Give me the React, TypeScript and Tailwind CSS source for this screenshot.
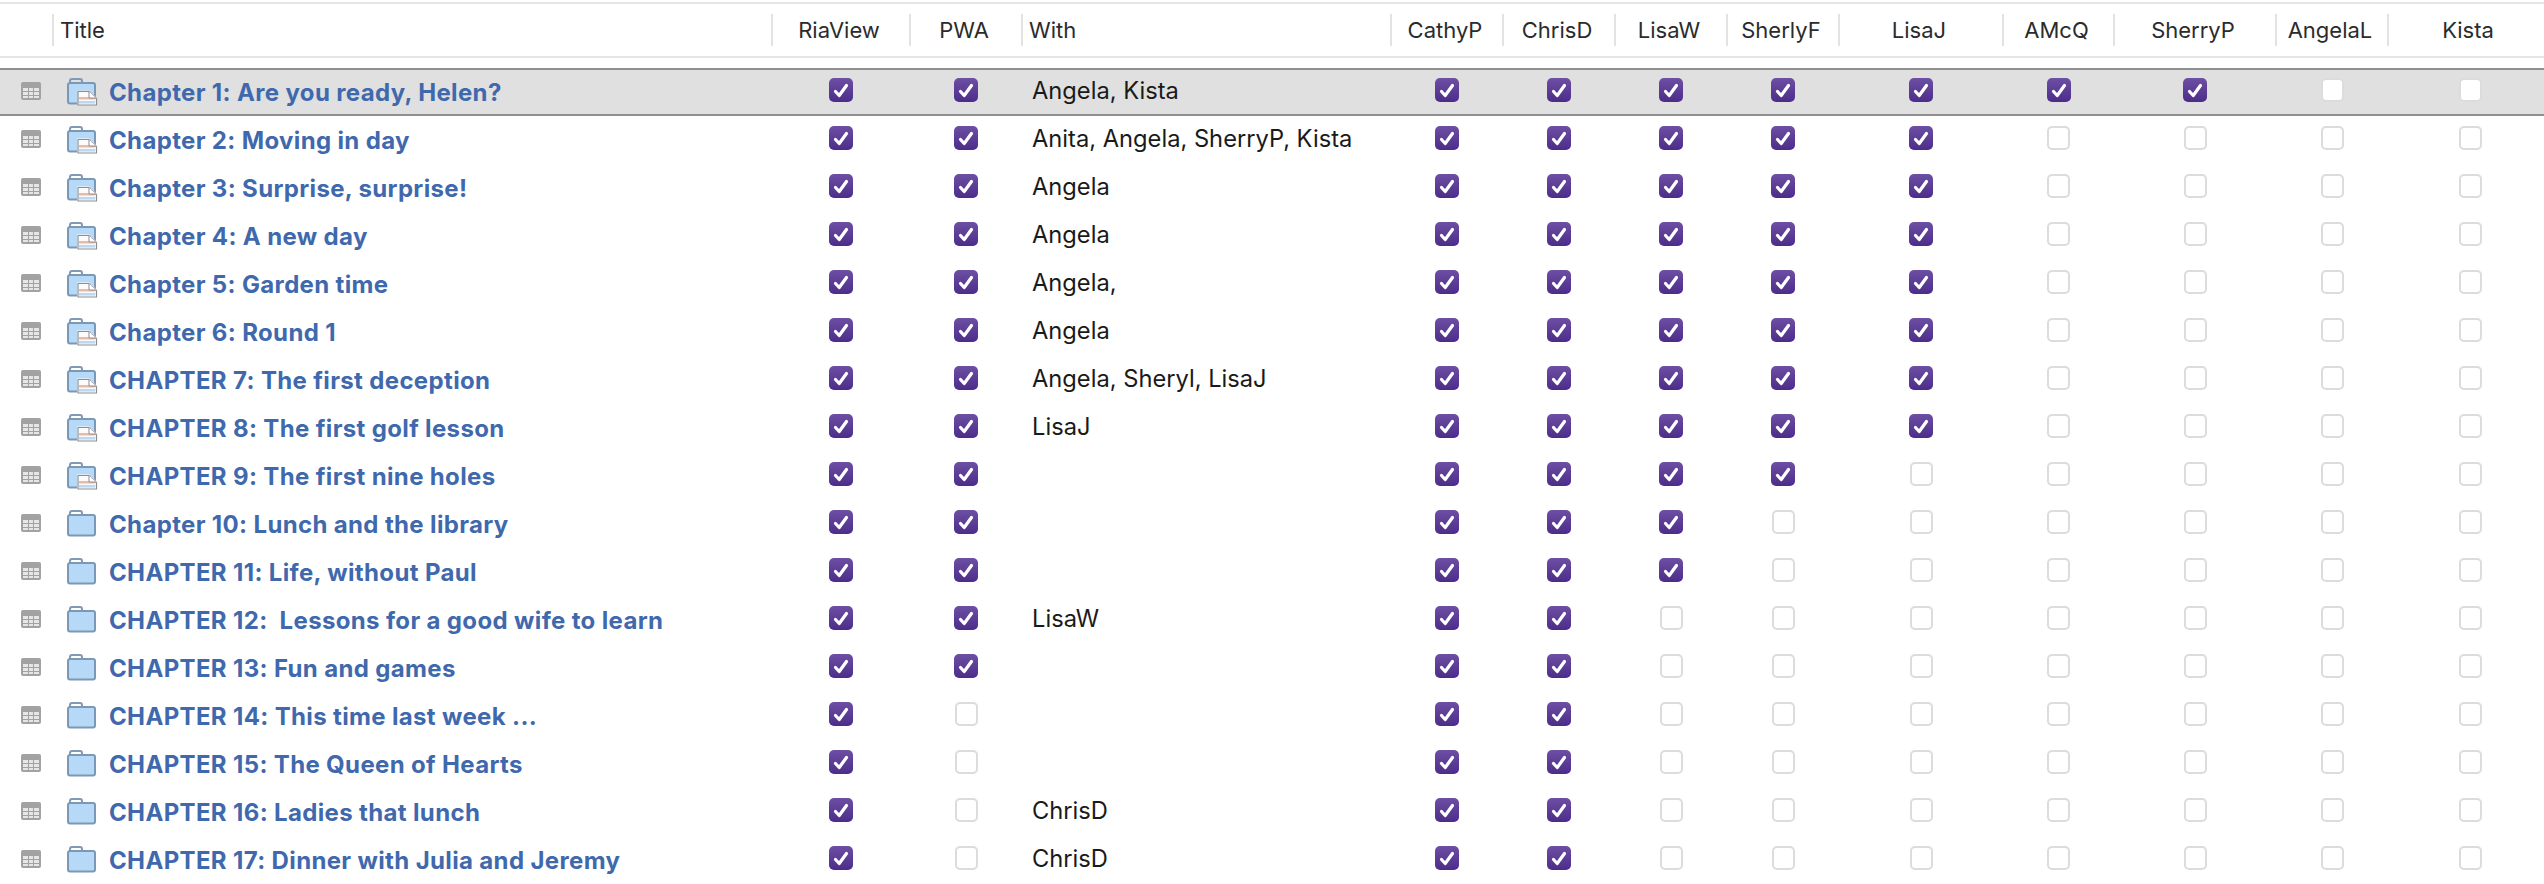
import React from 'react'

const GRID = 'grid grid-cols-[52px_719px_138px_112px_369px_112px_112px_112px_112px_164px_111px_162px_112px_164px]'

const people = ['CathyP', 'ChrisD', 'LisaW', 'SherlyF', 'LisaJ', 'AMcQ', 'SherryP', 'AngelaL', 'Kista']

// ticks = how many person columns are checked, left to right
const rows = [
    { title: 'Chapter 1: Are you ready, Helen?', pwa: true, withWho: 'Angela, Kista', ticks: 7, doc: true },
    { title: 'Chapter 2: Moving in day', pwa: true, withWho: 'Anita, Angela, SherryP, Kista', ticks: 5, doc: true },
    { title: 'Chapter 3: Surprise, surprise!', pwa: true, withWho: 'Angela', ticks: 5, doc: true },
    { title: 'Chapter 4: A new day', pwa: true, withWho: 'Angela', ticks: 5, doc: true },
    { title: 'Chapter 5: Garden time', pwa: true, withWho: 'Angela,', ticks: 5, doc: true },
    { title: 'Chapter 6: Round 1', pwa: true, withWho: 'Angela', ticks: 5, doc: true },
    { title: 'CHAPTER 7: The first deception', pwa: true, withWho: 'Angela, Sheryl, LisaJ', ticks: 5, doc: true },
    { title: 'CHAPTER 8: The first golf lesson', pwa: true, withWho: 'LisaJ', ticks: 5, doc: true },
    { title: 'CHAPTER 9: The first nine holes', pwa: true, withWho: '', ticks: 4, doc: true },
    { title: 'Chapter 10: Lunch and the library', pwa: true, withWho: '', ticks: 3, doc: false },
    { title: 'CHAPTER 11: Life, without Paul', pwa: true, withWho: '', ticks: 3, doc: false },
    { title: 'CHAPTER 12:  Lessons for a good wife to learn', pwa: true, withWho: 'LisaW', ticks: 2, doc: false },
    { title: 'CHAPTER 13: Fun and games', pwa: true, withWho: '', ticks: 2, doc: false },
    { title: 'CHAPTER 14: This time last week ...', pwa: false, withWho: '', ticks: 2, doc: false },
    { title: 'CHAPTER 15: The Queen of Hearts', pwa: false, withWho: '', ticks: 2, doc: false },
    { title: 'CHAPTER 16: Ladies that lunch', pwa: false, withWho: 'ChrisD', ticks: 2, doc: false },
    { title: 'CHAPTER 17: Dinner with Julia and Jeremy', pwa: false, withWho: 'ChrisD', ticks: 2, doc: false },
]

function TableIcon() {
    return (
        <svg width="20" height="18" viewBox="0 0 20 18" className="block">
            <rect x="0" y="0" width="20" height="18" rx="2" fill="#a2a2a2" />
            <rect x="2" y="6" width="5" height="3" fill="#e6e6e6" />
            <rect x="8" y="6" width="4" height="3" fill="#e6e6e6" />
            <rect x="13" y="6" width="5" height="3" fill="#e6e6e6" />
            <rect x="2" y="10" width="5" height="3" fill="#e6e6e6" />
            <rect x="8" y="10" width="4" height="3" fill="#e6e6e6" />
            <rect x="13" y="10" width="5" height="3" fill="#e6e6e6" />
            <rect x="2" y="14" width="5" height="2" fill="#e6e6e6" />
            <rect x="8" y="14" width="4" height="2" fill="#e6e6e6" />
            <rect x="13" y="14" width="5" height="2" fill="#e6e6e6" />
        </svg>
    )
}

function FolderIcon({ doc, bg }: { doc: boolean; bg: string }) {
    return (
        <svg width="31" height="28" viewBox="0 0 31 28" className="block">
            <path d="M3 5 V3 Q3 1 5 1 H13 Q15 1 15 3 V5" fill="none" stroke="#8099b6" strokeWidth="2" />
            <rect x="1" y="5" width="27" height="20.5" rx="2" fill="#b6d9f7" stroke="#7d97b6" strokeWidth="2" />
            {doc && (
                <>
                    <path d="M10 12.5 H22 L30 20 V27.5 H10 Z" fill={bg} stroke="none" />
                    <path d="M11 13.5 H22 L29.5 20.5 V27 H11 Z" fill="#fbfbfb" stroke="#8f8f8f" strokeWidth="1.2" />
                    <rect x="12" y="19" width="16" height="2.5" fill="#eab9a8" />
                    <rect x="12" y="23" width="16" height="2.5" fill="#b6d9f7" />
                    <path d="M22 13.5 V20 H29" fill="#ffffff" stroke="#8f8f8f" strokeWidth="1" />
                </>
            )}
        </svg>
    )
}

function Check({ on }: { on: boolean }) {
    if (!on) {
        return <div className="w-[23px] h-[24px] rounded-[5px] bg-white border-2 border-[#dcdcdc]" />
    }
    return (
        <div className="w-[24px] h-[24px] rounded-[5px] bg-gradient-to-b from-[#6d4fa3] to-[#4c2c8a] flex items-center justify-center">
            <svg width="16" height="15" viewBox="0 0 16 15">
                <path d="M2.5 8.5 L6.2 12.5 L13.5 2.5" fill="none" stroke="#ffffff" strokeWidth="3.2" strokeLinecap="round" strokeLinejoin="round" />
            </svg>
        </div>
    )
}

function CheckCell({ on }: { on: boolean }) {
    return (
        <div className="flex justify-center pl-[2px] pt-[8px]">
            <Check on={on} />
        </div>
    )
}

function HeaderCell({ label, left, first }: { label?: string; left?: boolean; first?: boolean }) {
    return (
        <div className={`h-[32px] ${first ? '' : 'border-l-2 border-[#e3e3e3]'} flex items-center ${left ? 'justify-start pl-[6px]' : 'justify-center pr-[4px]'}`}>
            {label}
        </div>
    )
}

export default function App() {
    return (
        <div className="w-[2544px] h-[884px] overflow-hidden bg-white font-['Inter','Liberation_Sans',sans-serif]">
            <div className="mt-[2px] h-[2px] bg-[#e5e5e5]" />
            <div className={`${GRID} pt-[10px] h-[54px] text-[22px] text-[#2b2b2b] border-b-2 border-[#e5e5e5]`}>
                <HeaderCell first />
                <HeaderCell label="Title" left />
                <HeaderCell label="RiaView" />
                <HeaderCell label="PWA" />
                <HeaderCell label="With" left />
                {people.map((p) => (
                    <HeaderCell key={p} label={p} />
                ))}
            </div>
            <div className="mt-[10px]">
                {rows.map((r, i) => {
                    const selected = i === 0
                    return (
                        <div
                            key={r.title}
                            className={`${GRID} h-[48px] ${selected ? 'bg-[#e0e0e0] border-y-2 border-[#8f8f8f]' : 'border-y-2 border-transparent'}`}
                        >
                            <div className="pl-[21px] pt-[12px]">
                                <TableIcon />
                            </div>
                            <div className="flex items-start">
                                <div className="pl-[15px] pt-[8px]">
                                    <FolderIcon doc={r.doc} bg={selected ? '#e0e0e0' : '#ffffff'} />
                                </div>
                                <div className="pl-[11px] pt-[8px] text-[24px] tracking-[0.35px] leading-[30px] font-bold text-[#4069ad] whitespace-pre">
                                    {r.title}
                                </div>
                            </div>
                            <CheckCell on />
                            <CheckCell on={r.pwa} />
                            <div className="pl-[11px] pt-[6px] text-[23.7px] leading-[30px] text-[#1a1a1a] whitespace-pre">
                                {r.withWho}
                            </div>
                            {people.map((p, j) => (
                                <CheckCell key={p} on={j < r.ticks} />
                            ))}
                        </div>
                    )
                })}
            </div>
        </div>
    )
}
